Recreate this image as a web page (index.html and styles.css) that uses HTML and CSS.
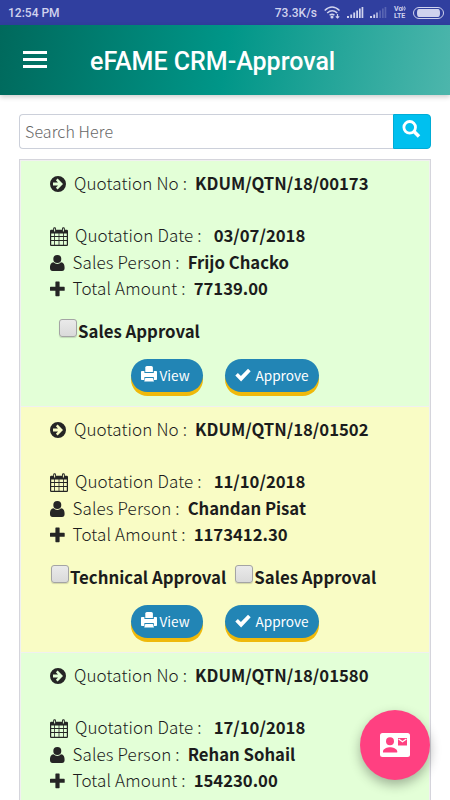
FILE: index.html
```html
<!DOCTYPE html>
<html lang="en">
<head>
    <meta charset="UTF-8">
    <meta name="viewport" content="width=device-width, initial-scale=1.0">
    <title>eFAME CRM-Approval</title>
    <link rel="stylesheet" href="styles.css">
</head>
<body>
    <svg class="sprite">
        <symbol id="icon-arrow" viewBox="0 0 16 16">
            <path fill-rule="evenodd" d="M8 0a8 8 0 1 1 0 16A8 8 0 0 1 8 0zM7.6 2.6L5.900 4.300 8 6.400H3v3.200h5L5.900 11.700l1.700 1.700L13 8z"/>
        </symbol>
        <symbol id="icon-calendar" viewBox="0 0 18 19">
            <path fill-rule="evenodd" d="M1.2 2.8h2V1.6Q3.2.2 4.6.2T6 1.6v1.2h6V1.6Q12 .2 13.4.2t1.4 1.4v1.2h2q1.2 0 1.2 1.2v13.8q0 1.2-1.2 1.2H1.2Q0 19 0 17.8V4q0-1.2 1.2-1.2zM4.1 1.6v3h1v-3zm8.800 0v3h1v-3zM1.200 6.600v2.500h3V6.600zm3.800 0v2.500h3.600V6.600zm4.400 0v2.500H13V6.600zm4.400 0v2.500h3V6.600zM1.200 9.900v3.200h3V9.900zm3.800 0v3.200h3.600V9.900zm4.400 0v3.200H13V9.900zm4.400 0v3.200h3V9.900zM1.200 13.900v3.900h3v-3.900zm3.800 0v3.900h3.600v-3.900zm4.400 0v3.900H13v-3.900zm4.400 0v3.900h3v-3.900z"/>
        </symbol>
        <symbol id="icon-user" viewBox="0 0 15 16">
            <circle cx="7.300" cy="4" r="4"/>
            <path d="M3.600 7.300Q5 8.900 7.300 8.900T11 7.300C13.800 7.600 14.600 10 14.600 13q0 2.900-2.600 2.900H2.600Q0 15.900 0 13C0 10 .8 7.600 3.600 7.300z"/>
        </symbol>
        <symbol id="icon-plus" viewBox="0 0 15 15">
            <path d="M6 0h3q.6 0 .6.600V5.300h4.500q.6 0 .6.600v2.800q0 .6-.6.600H9.600v4.800q0 .6-.6.600H6q-.6 0-.6-.6V9.300H.6Q0 9.300 0 8.700V5.900q0-.6.600-.6h4.800V.6Q5.400 0 6 0z"/>
        </symbol>
        <symbol id="icon-print" viewBox="0 0 16 16">
            <path d="M4.300 6V1.600Q4.300 0 5.900 0h4.400q1.600 0 1.600 1.600V6z"/>
            <path fill-rule="evenodd" d="M.8 5h2.600v2h9.400V5h2.400q.8 0 .8.800v7.400q0 .8-.8.800h-2.400v-3H3.400v3H.8Q0 14 0 13.200V5.800Q0 5 .8 5z"/>
            <path d="M4.300 12h7.500l1.200 3.600H3.200z"/>
        </symbol>
        <symbol id="icon-check" viewBox="0 0 16 14">
            <path d="M.3 7.600L2.900 5l3 3L13 .7l2.700 2.500-9.600 10.200z"/>
        </symbol>
    </svg>

    <div class="status-bar">
        <span>12:54 PM</span>
        <div class="status-icons">
            <span class="speed">73.3K/s</span>
            <svg width="17" height="13" viewBox="0 0 17 13" fill="none" stroke="#d0d3ee" stroke-width="1.500">
                <path d="M.7 4.500q7.300-7 14.800 0M3.200 7q5-4.500 10 0M5.600 9.300q2.500-2.200 4.800 0"/>
                <circle cx="8" cy="11" r=".8"/>
                <path d="M13.500 8v4M11.800 10.300l1.700 1.700 1.700-1.700" stroke-width="1.200"/>
            </svg>
            <svg class="signal" width="17" height="11" viewBox="0 0 17 11" fill="#d0d3ee">
                <path d="M0 9h2v2H0zM3.300 7.500h1.800V11H3.300zM6.300 5.500h1.800V11H6.300zM9.200 3.500H11V11H9.200zM12 1.500h1.700V11H12zM14.600 0h1.700v11h-1.700z"/>
            </svg>
            <svg class="signal" width="17" height="11" viewBox="0 0 17 11" fill="#d0d3ee">
                <path d="M0 9h2v2H0zM3.300 7.500h1.800V11H3.300zM6.300 5.500h1.400V11H6.300z"/>
                <path opacity=".25" d="M9.200 3.500H11V11H9.200zM12 1.500h1.700V11H12zM14.600 0h1.700v11h-1.700z"/>
            </svg>
            <div class="volte">
                <div>Vo<svg width="4" height="5" viewBox="0 0 4 5" fill="none" stroke="#d0d3ee"><path d="M.5.500q1.200 2 0 4M2.500.500q1.200 2 0 4"/></svg></div>
                <div>LTE</div>
            </div>
            <span class="battery"></span>
        </div>
    </div>

    <div class="header">
        <div class="menu"><span></span><span></span><span></span></div>
        <h1>eFAME CRM-Approval</h1>
    </div>

    <div class="container">
        <div class="search">
            <input type="text" placeholder="Search Here">
            <button>
                <svg width="19" height="19" viewBox="0 0 19 19" fill="none" stroke="#fff">
                    <circle cx="7.700" cy="7.300" r="5.800" stroke-width="2.800"/>
                    <path d="M12 11.500l5 5" stroke-width="3.600"/>
                </svg>
            </button>
        </div>

        <div class="list">
            <div class="card green">
                <div class="row first"><svg class="icon arrow"><use href="#icon-arrow"/></svg><span>Quotation No :</span><b>KDUM/QTN/18/00173</b></div>
                <div class="row date"><svg class="icon calendar"><use href="#icon-calendar"/></svg><span>Quotation Date :</span><b>03/07/2018</b></div>
                <div class="row"><svg class="icon user"><use href="#icon-user"/></svg><span>Sales Person :</span><b>Frijo Chacko</b></div>
                <div class="row"><svg class="icon plus"><use href="#icon-plus"/></svg><span>Total Amount :</span><b>77139.00</b></div>
                <div class="checks single">
                    <label><input type="checkbox">Sales Approval</label>
                </div>
                <div class="actions">
                    <button class="view"><svg class="print"><use href="#icon-print"/></svg>View</button>
                    <button class="approve"><svg class="check"><use href="#icon-check"/></svg>Approve</button>
                </div>
            </div>

            <div class="card yellow">
                <div class="row first"><svg class="icon arrow"><use href="#icon-arrow"/></svg><span>Quotation No :</span><b>KDUM/QTN/18/01502</b></div>
                <div class="row date"><svg class="icon calendar"><use href="#icon-calendar"/></svg><span>Quotation Date :</span><b>11/10/2018</b></div>
                <div class="row"><svg class="icon user"><use href="#icon-user"/></svg><span>Sales Person :</span><b>Chandan Pisat</b></div>
                <div class="row"><svg class="icon plus"><use href="#icon-plus"/></svg><span>Total Amount :</span><b>1173412.30</b></div>
                <div class="checks">
                    <label><input type="checkbox">Technical Approval</label>
                    <label><input type="checkbox">Sales Approval</label>
                </div>
                <div class="actions">
                    <button class="view"><svg class="print"><use href="#icon-print"/></svg>View</button>
                    <button class="approve"><svg class="check"><use href="#icon-check"/></svg>Approve</button>
                </div>
            </div>

            <div class="card green">
                <div class="row first"><svg class="icon arrow"><use href="#icon-arrow"/></svg><span>Quotation No :</span><b>KDUM/QTN/18/01580</b></div>
                <div class="row date"><svg class="icon calendar"><use href="#icon-calendar"/></svg><span>Quotation Date :</span><b>17/10/2018</b></div>
                <div class="row"><svg class="icon user"><use href="#icon-user"/></svg><span>Sales Person :</span><b>Rehan Sohail</b></div>
                <div class="row"><svg class="icon plus"><use href="#icon-plus"/></svg><span>Total Amount :</span><b>154230.00</b></div>
            </div>
        </div>
    </div>

    <button class="fab">
        <svg width="30" height="24" viewBox="0 0 30 24">
            <rect width="30" height="24" rx="2.500" fill="#fff"/>
            <g fill="#ff4081">
                <circle cx="10" cy="8.300" r="4"/>
                <path d="M3 19.500v-1.200c0-2.600 4.500-4.100 7-4.100s7.200 1.500 7.200 4.100v1.200z"/>
                <path d="M18 5h9v7.500h-9z"/>
            </g>
            <path d="M18.600 6l3.900 2.800L26.400 6" fill="none" stroke="#fff" stroke-width="1.300"/>
        </svg>
    </button>
</body>
</html>
```
FILE: styles.css
```css
* {
    box-sizing: border-box;
}
body {
    margin: 0;
    height: 800px;
    overflow: hidden;
    background: #fff;
    color: #1c1c1c;
    font-family: "Noto Sans CJK SC", "Open Sans", sans-serif;
}
.sprite {
    display: none;
}

/* Status bar */
.status-bar {
    display: flex;
    justify-content: space-between;
    align-items: center;
    height: 25px;
    padding: 0 6px 0 8px;
    background: #303f9f;
    color: #d0d3ee;
    font: 500 12px/25px Roboto, sans-serif;
}
.status-bar > span, .speed {
    padding-top: 1px;
}
.status-icons {
    display: flex;
    align-items: center;
}
.speed {
    margin-right: 7px;
}
.signal {
    margin-left: 6px;
}
.volte {
    width: 14px;
    margin: 0 5px 0 7px;
    font: 700 7px/7px Roboto, sans-serif;
}
.volte div {
    height: 7px;
    white-space: nowrap;
}
.battery {
    width: 31px;
    height: 12px;
    border: 1px solid #d0d3ee;
    border-radius: 6px;
    background: #d0d3ee content-box;
    padding: 1px 3px;
}

/* Header */
.header {
    position: relative;
    display: flex;
    align-items: center;
    height: 70px;
    padding-left: 23px;
    background: linear-gradient(100deg, #00695c, #009688 50%, #4db6ac);
    box-shadow: 0 2px 5px rgba(0, 0, 0, 0.2);
}
.menu {
    display: flex;
    flex-direction: column;
    gap: 4px;
    width: 24px;
    margin-bottom: 1px;
}
.menu span {
    height: 3px;
    background: #fff;
}
.header h1 {
    margin: 3px 0 0 43px;
    color: #fff;
    font: 500 25px/30px Roboto, sans-serif;
}

/* Search */
.container {
    padding: 19px 19px 0;
}
.search {
    display: flex;
    height: 35px;
    margin-bottom: 10px;
}
.search input {
    flex: 1;
    min-width: 0;
    padding: 0 5px;
    border: 1px solid #ccd0da;
    border-right: 0;
    border-radius: 4px 0 0 4px;
    font: 300 16px/33px "Noto Sans CJK SC", sans-serif;
    letter-spacing: 0.1px;
}
.search input::placeholder {
    color: #666;
}
.search button {
    width: 38px;
    padding: 0 2px 4px 0;
    border: 1px solid #00acd6;
    border-radius: 0 4px 4px 0;
    background: #00c0ef;
}
.search svg {
    display: block;
    margin: auto;
}

/* Quotations */
.list {
    padding: 0 1px;
    border: 1px solid #d5d5dc;
    border-bottom: 0;
    background: #f0f0f0;
}
.card {
    height: 246px;
    padding-top: 10px;
    border-top: 1px solid #f0f0f0;
}
.green {
    background: #e3ffd7;
}
.yellow {
    background: #f9fcc5;
}
.row {
    display: flex;
    align-items: center;
    height: 26.25px;
    padding-left: 29px;
    font-size: 17px;
    line-height: 26px;
    white-space: nowrap;
}
.row span {
    margin-top: -2px;
    font-weight: 300;
    letter-spacing: 0.13px;
}
.row b {
    margin: -2px 0 0 8px;
    font-size: 16.7px;
    font-weight: 700;
}
.first {
    margin-bottom: 26px;
}
.row.date b {
    margin-left: 12px;
}
.icon {
    fill: #252525;
    margin-right: 8px;
}
.arrow {
    width: 16px;
    height: 16px;
}
.calendar {
    width: 18px;
    height: 19px;
    margin-right: 7px;
}
.user, .plus {
    width: 15px;
    height: 16px;
    margin-right: 7.5px;
}

/* Approvals */
.checks {
    display: flex;
    gap: 9px;
    height: 26px;
    margin-top: 14px;
    padding-left: 30px;
    font-size: 16.8px;
    font-weight: 700;
    line-height: 30px;
    white-space: nowrap;
}
.single {
    padding-left: 38px;
}
.checks label {
    display: flex;
}
.checks input {
    appearance: none;
    width: 18px;
    height: 18px;
    margin: 3px 1px 0 0;
    border: 1px solid #a4a4a4;
    border-radius: 3px;
    background: linear-gradient(#eaeaea, #dadada);
    box-shadow: 0 1px 1px rgba(0, 0, 0, 0.15);
}
.actions {
    display: flex;
    gap: 22px;
    margin-top: 17px;
    padding-left: 110px;
}
.actions button {
    display: flex;
    align-items: center;
    height: 33px;
    padding: 0 0 1px 10px;
    border: 0;
    border-radius: 17px;
    background: #2285b5;
    box-shadow: 0 4px 0 #efb90b;
    color: #fff;
    font: 400 13.6px/32px "Noto Sans CJK SC", sans-serif;
}
.actions .view {
    width: 72px;
}
.actions .approve {
    width: 94px;
}
.actions svg {
    fill: #fff;
}
.print {
    width: 16px;
    height: 16px;
    margin: 0 2.5px 2px 0;
}
.check {
    width: 16px;
    height: 14px;
    margin: 0 4.5px 1px 0;
}

.fab {
    position: absolute;
    left: 360px;
    top: 710px;
    width: 70px;
    height: 70px;
    padding: 0;
    border: 0;
    border-radius: 50%;
    background: #ff4081;
    box-shadow: 0 5px 12px rgba(0, 0, 0, 0.3);
}
.fab svg {
    display: block;
    margin: auto;
}
```
